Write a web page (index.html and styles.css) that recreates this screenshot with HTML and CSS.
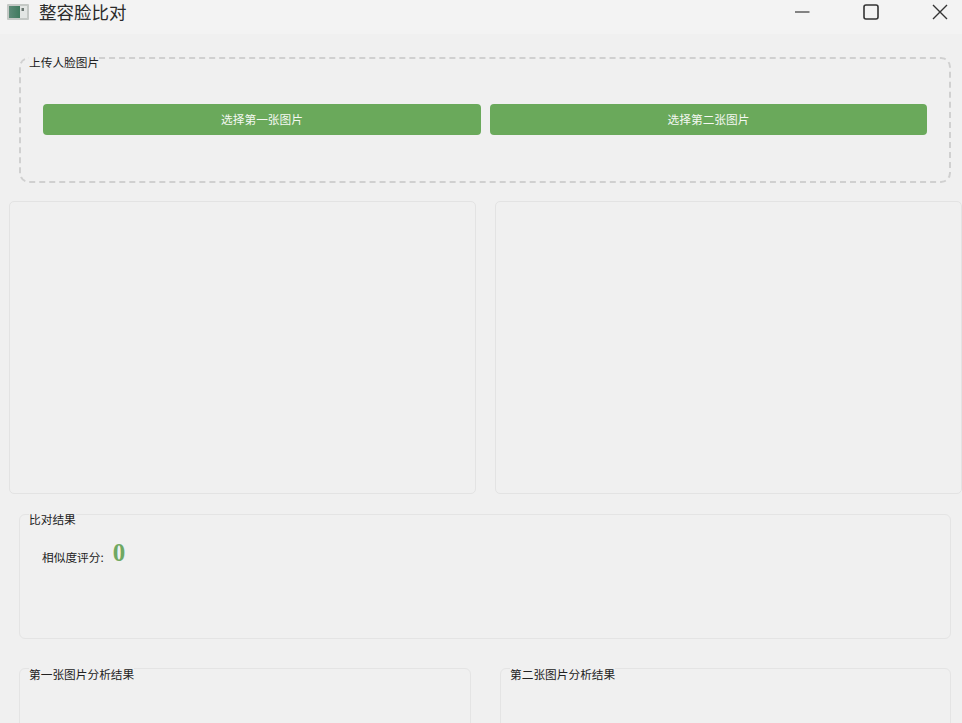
FILE: index.html
```html
<!DOCTYPE html>
<html lang="zh-CN">
<head>
<meta charset="utf-8">
<title>整容脸比对</title>
<link rel="stylesheet" href="styles.css">
</head>
<body>
<div class="window">
  <header class="titlebar">
    <svg class="app-icon" width="22" height="16" viewBox="0 0 22 16">
      <defs>
        <linearGradient id="icon-fill" x1="0" y1="0" x2="1" y2="0">
          <stop offset="0" stop-color="#5d8a78"/>
          <stop offset="1" stop-color="#3f7a5e"/>
        </linearGradient>
      </defs>
      <rect x="0" y="0" width="22" height="16" rx="1" fill="#c4c8c5"/>
      <rect x="2" y="2" width="11" height="12" fill="url(#icon-fill)"/>
      <rect x="13" y="2" width="7" height="12" fill="#e3e6e4"/>
      <rect x="14.5" y="4" width="2.5" height="3" fill="#6a7671"/>
    </svg>
    <span class="app-title">整容脸比对</span>
    <div class="window-controls">
      <svg class="control" width="16" height="16" viewBox="0 0 16 16"><path d="M1 8H15.5" stroke="#444" stroke-width="1.3" fill="none"/></svg>
      <svg class="control" width="16" height="16" viewBox="0 0 16 16"><rect x="1" y="1" width="14" height="14" rx="2" stroke="#333" stroke-width="1.6" fill="none"/></svg>
      <svg class="control" width="16" height="16" viewBox="0 0 16 16"><path d="M1 1L15 15M15 1L1 15" stroke="#333" stroke-width="1.4" fill="none"/></svg>
    </div>
  </header>
  <main class="content">
    <section class="group group-upload">
      <h2 class="legend">上传人脸图片</h2>
      <div class="upload-buttons">
        <button class="pick-button" type="button">选择第一张图片</button>
        <button class="pick-button" type="button">选择第二张图片</button>
      </div>
    </section>
    <div class="previews">
      <div class="preview"></div>
      <div class="preview"></div>
    </div>
    <section class="group group-result">
      <h2 class="legend">比对结果</h2>
      <div class="score-row">
        <span class="score-label">相似度评分:</span>
        <span class="score-value">0</span>
      </div>
    </section>
    <div class="analysis">
      <section class="group group-analysis"><h2 class="legend">第一张图片分析结果</h2></section>
      <section class="group group-analysis"><h2 class="legend">第二张图片分析结果</h2></section>
    </div>
  </main>
</div>
</body>
</html>
```

FILE: styles.css
```css
* { box-sizing: border-box; }
html, body { margin: 0; height: 100%; overflow: hidden; }
body {
  background: #f0f0f0;
  color: #222;
  font-family: "Noto Sans CJK SC", "Liberation Sans", sans-serif;
}
.window { width: 962px; height: 723px; overflow: hidden; }
.titlebar {
  height: 34px;
  background: #f3f3f3;
  display: flex;
  align-items: flex-start;
  padding: 3px 0 0 7px;
}
.app-icon { margin-top: 1px; }
.app-title {
  margin-left: 10px;
  font-size: 17.5px;
  line-height: 18px;
  color: #2a2a2a;
}
.window-controls {
  margin-left: auto;
  display: flex;
  gap: 53px;
  padding: 1px 14px 0 0;
}
.content {
  padding: 23px 0 0 9px;
  display: flex;
  flex-direction: column;
}
.group {
  position: relative;
  border: 1px solid #e4e4e4;
  border-radius: 6px;
}
.legend {
  position: absolute;
  left: 9px;
  top: -4px;
  margin: 0;
  font-size: 11.7px;
  line-height: 16px;
  font-weight: 400;
  color: #222;
  background: #f0f0f0;
}
.group-upload {
  margin-left: 10px;
  width: 932px;
  height: 126px;
  border: 2px dashed #d0d0d0;
  border-radius: 10px;
}
.group-upload .legend { left: 8px; top: -5px; }
.upload-buttons {
  display: flex;
  gap: 9px;
  padding: 45px 0 0 22px;
}
.pick-button {
  width: 438px;
  height: 31px;
  border: 0;
  border-radius: 4px;
  background: #6aa95b;
  color: #f4f8f2;
  font: inherit;
  font-size: 11.7px;
  padding: 0 0 2px;
}
.pick-button + .pick-button { width: 437px; }
.previews {
  display: flex;
  gap: 19px;
  margin-top: 18px;
}
.preview {
  width: 467px;
  height: 293px;
  border: 1px solid #e3e3e3;
  border-radius: 5px;
}
.group-result {
  margin: 20px 0 0 10px;
  width: 932px;
  height: 125px;
}
.score-row {
  display: flex;
  align-items: flex-start;
  gap: 9px;
  padding: 24px 0 0 22px;
}
.score-label { font-size: 11.7px; line-height: 16px; margin-top: 10px; }
.score-value {
  font-family: "Liberation Serif", serif;
  font-size: 25px;
  line-height: 28px;
  font-weight: 700;
  color: #6fa862;
}
.analysis {
  display: flex;
  gap: 29px;
  margin: 29px 0 0 10px;
}
.group-analysis {
  width: 452px;
  height: 120px;
}
.group-analysis + .group-analysis { width: 451px; }
.group-analysis .legend { top: -3px; }
```
